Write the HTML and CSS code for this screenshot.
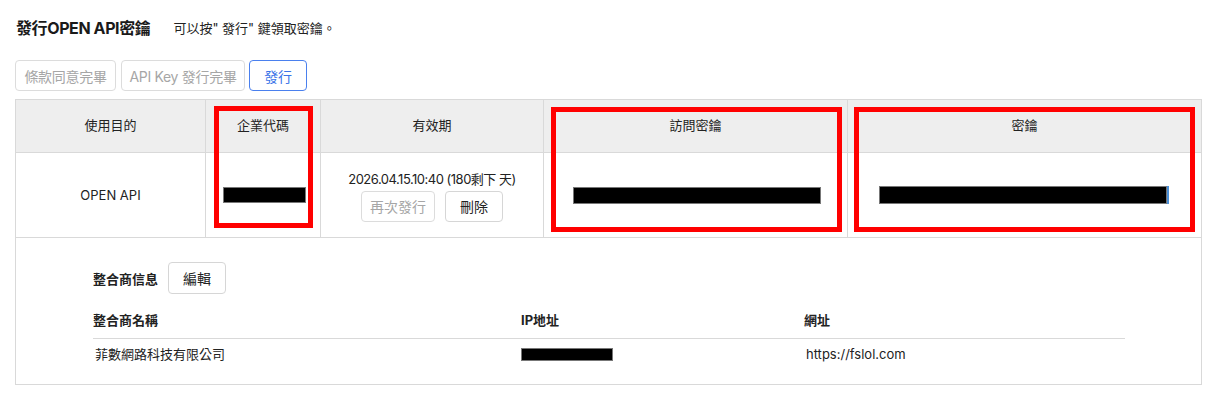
FILE: index.html
```html
<!DOCTYPE html>
<html lang="zh-Hant">
<head>
<meta charset="utf-8">
<title>發行OPEN API密鑰</title>
<link rel="stylesheet" href="styles.css">
</head>
<body>
<div class="page">
  <div class="title-row">
    <h1 class="title">發行OPEN API密鑰</h1>
    <p class="subtitle">可以按" 發行" 鍵領取密鑰。</p>
  </div>
  <div class="actions">
    <button class="btn btn-disabled btn-w1">條款同意完畢</button>
    <button class="btn btn-disabled btn-w2">API Key 發行完畢</button>
    <button class="btn btn-primary btn-w3">發行</button>
  </div>
  <div class="keytable">
    <div class="grid">
      <div class="cell head">使用目的</div>
      <div class="cell head">企業代碼</div>
      <div class="cell head">有效期</div>
      <div class="cell head">訪問密鑰</div>
      <div class="cell head last">密鑰</div>

      <div class="cell body">OPEN API</div>
      <div class="cell body"><span class="redact r1"></span></div>
      <div class="cell body stack">
        <div class="date">2026.04.15.10:40 (180剩下 天)</div>
        <div class="row-btns">
          <button class="btn btn-disabled btn-sm1">再次發行</button>
          <button class="btn btn-default btn-sm2">刪除</button>
        </div>
      </div>
      <div class="cell body"><span class="redact r2"></span></div>
      <div class="cell body last"><span class="redact r3"></span></div>
    </div>
    <div class="integrator">
      <div class="int-head">
        <span class="int-label">整合商信息</span>
        <button class="btn btn-default btn-edit">編輯</button>
      </div>
      <div class="int-table">
        <div class="ith c1">整合商名稱</div>
        <div class="ith c2">IP地址</div>
        <div class="ith c3">網址</div>
        <div class="itd c1">菲數網路科技有限公司</div>
        <div class="itd c2"><span class="redact r4"></span></div>
        <div class="itd c3">https://fslol.com</div>
      </div>
    </div>
    <div class="mark m1"></div>
    <div class="mark m2"></div>
    <div class="mark m3"></div>
  </div>
</div>
</body>
</html>
```
FILE: styles.css
```css
* { box-sizing: border-box; }
html, body { margin: 0; padding: 0; background: #fff; }
body {
  font-family: "Inter", "Noto Sans CJK TC", sans-serif;
  font-size: 13px;
  color: #222;
}
.page { padding: 15px 0 0 15px; }

.title-row {
  display: flex;
  align-items: center;
  height: 24px;
  padding-left: 1px;
}
.title {
  margin: 0;
  font-size: 16px;
  font-weight: 700;
  letter-spacing: -0.4px;
  color: #1a1a1a;
}
.subtitle {
  margin: 0 0 0 23px;
  font-size: 13px;
  color: #222;
}

.actions {
  display: flex;
  gap: 5px;
  margin-top: 21px;
}
.btn {
  font-family: inherit;
  font-size: 14px;
  height: 31px;
  padding: 0;
  border-radius: 4px;
  background: #fff;
  border: 1px solid #d6d6d6;
  color: #222;
  cursor: pointer;
}
.actions .btn { letter-spacing: -0.3px; }
.btn-disabled { color: #a6a6a6; border-color: #dcdcdc; }
.btn-primary { color: #3a74e8; border-color: #4a80ee; }
.btn-w1 { width: 101px; }
.btn-w2 { width: 124px; }
.btn-w3 { width: 58px; margin-left: -1px; }

.keytable {
  position: relative;
  margin-top: 8px;
  width: 1187px;
  border: 1px solid #d9d9d9;
}
.grid {
  display: grid;
  grid-template-columns: 190px 115px 223px 304px 1fr;
}
.cell {
  display: flex;
  align-items: center;
  justify-content: center;
  border-right: 1px solid #d9d9d9;
  border-bottom: 1px solid #d9d9d9;
  text-align: center;
}
.cell.last { border-right: none; }
.head {
  height: 53px;
  background: #eeeeee;
  padding-bottom: 4px;
}
.body { height: 85px; }
.stack {
  flex-direction: column;
  gap: 4px;
  padding-top: 2px;
}
.date { line-height: 16px; letter-spacing: -0.5px; }
.row-btns { display: flex; gap: 10px; }
.btn-sm1 { width: 74px; }
.btn-sm2 { width: 58px; }

.redact {
  display: inline-block;
  background: #000;
  border: 1px solid #777;
}
.r1 { width: 83px; height: 16px; margin-left: 2px; }
.r2 { width: 248px; height: 17px; margin-left: 3px; margin-top: 1px; }
.r3 { width: 288px; height: 18px; margin-left: -3px; box-shadow: 2px 0 0 #4a90d9; }
.r4 { width: 92px; height: 13px; }

.integrator {
  padding: 24px 0 15px 77px;
}
.int-head {
  display: flex;
  align-items: center;
  gap: 10px;
}
.int-label { font-weight: 700; }
.btn-edit { width: 58px; height: 32px; }
.int-table {
  display: grid;
  grid-template-columns: 428px 283px 321px;
}
.ith {
  font-weight: 700;
  line-height: 16px;
  padding: 18px 0 10px;
  border-bottom: 1px solid #d9d9d9;
}
.itd {
  line-height: 16px;
  padding: 7px 0 7px;
  display: flex;
  align-items: center;
}
.itd.c1 { padding-left: 2px; }
.itd.c3 { padding-left: 2px; }

.mark {
  position: absolute;
  border: 5px solid #ff0000;
}
.m1 { left: 198px; top: 6px; width: 99px; height: 122px; }
.m2 { left: 535px; top: 7px; width: 291px; height: 125px; }
.m3 { left: 838px; top: 7px; width: 341px; height: 125px; }
```
